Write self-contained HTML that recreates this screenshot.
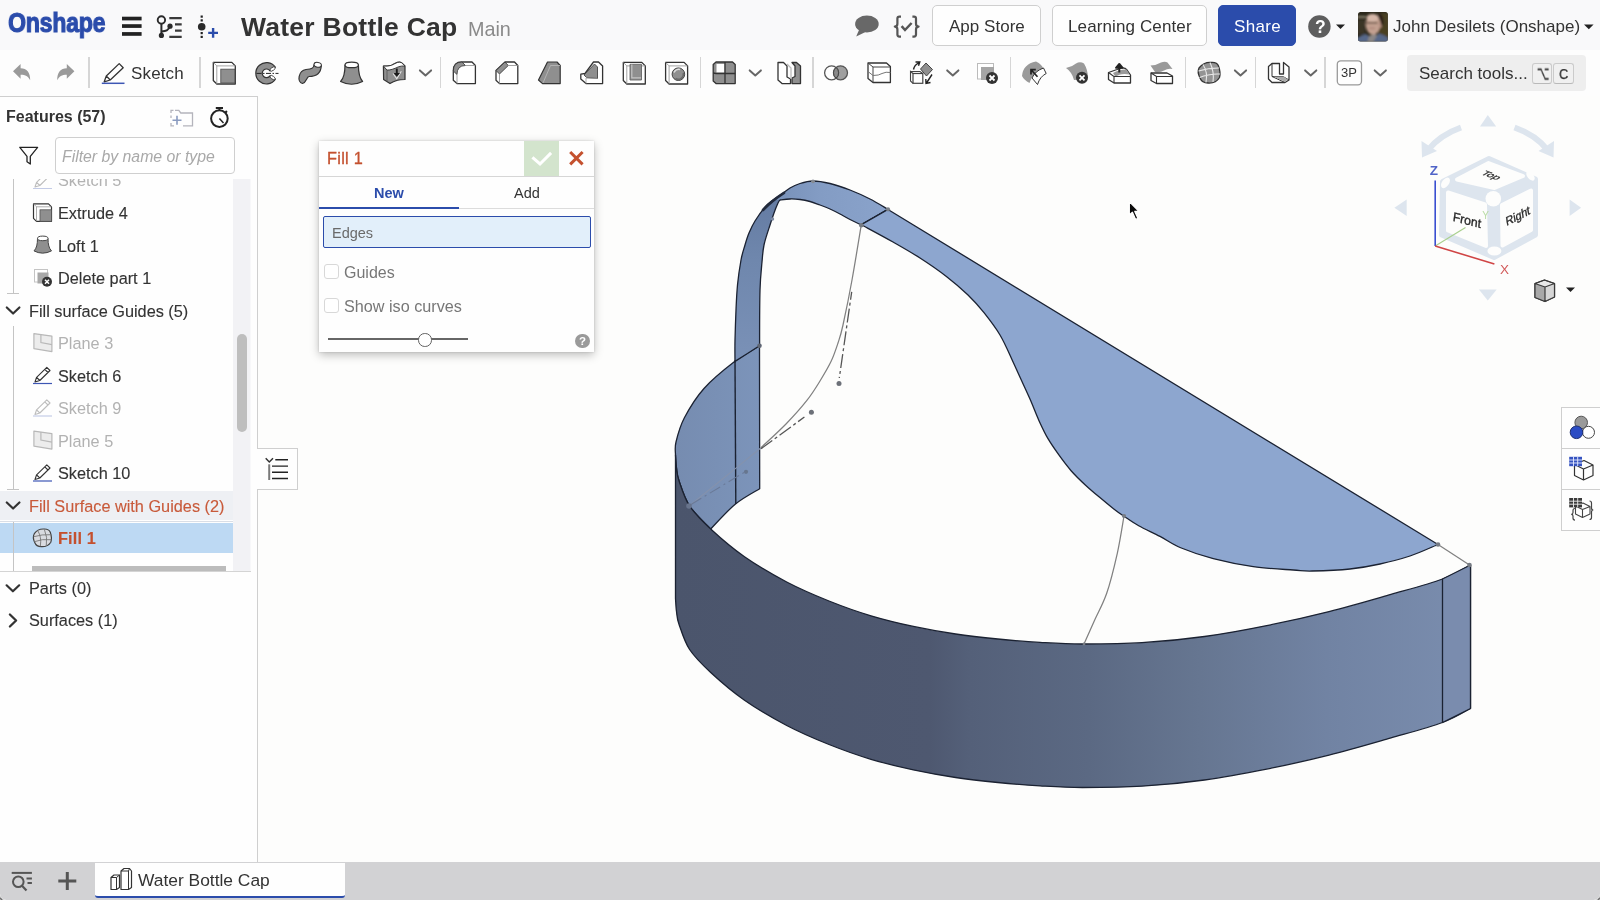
<!DOCTYPE html>
<html lang="en"><head><meta charset="utf-8"><title>Water Bottle Cap</title>
<style>
html,body{margin:0;padding:0}
body{width:1600px;height:900px;overflow:hidden;position:relative;background:#fdfdfc;font-family:"Liberation Sans",sans-serif;color:#333}
.t{position:absolute;white-space:nowrap;line-height:24px;height:24px;will-change:transform}
.abs{position:absolute}
#row1{position:absolute;left:0;top:0;width:1600px;height:50px;background:#f9f9fa}
#row2{position:absolute;left:0;top:50px;width:1600px;height:46px;background:#fdfdfd}
.btn{position:absolute;top:4.6px;height:41.5px;border:1px solid #cfcfcf;border-radius:5px;background:#fefefe;box-sizing:border-box}
.sep{position:absolute;top:57px;width:1.5px;height:31px;background:#d6d6d6}
#panel{position:absolute;left:0;top:96px;width:258px;height:766px;background:#fefefe;border-top:1px solid #cfcfcf;border-right:1px solid #cfcfcf;box-sizing:border-box}
#bottom{position:absolute;left:0;top:862.4px;width:1600px;height:38px;background:#d2d2d4}
svg{overflow:visible}
.ic{position:absolute}
</style></head><body>
<div id="row1"></div><div id="row2"></div>
<span class="t" style="left:8px;top:3.7px;height:36px;line-height:36px;font-size:28.5px;font-weight:700;color:#2b4cab;transform-origin:0 50%;transform:scaleX(0.815);letter-spacing:-0.4px;-webkit-text-stroke:1.1px #2b4cab" id="logo">Onshape</span>
<span class="t " style="left:241.0px;top:15.3px;font-size:26.5px;color:#333;font-weight:700;letter-spacing:0.25px;">Water Bottle Cap</span><span class="t " style="left:468.0px;top:17.0px;font-size:19.8px;color:#8a8a8a;font-weight:400;">Main</span><div class="btn" style="left:932px;width:109px"></div><span class="t " style="left:949.0px;top:15.3px;font-size:17.0px;color:#333;font-weight:400;letter-spacing:0.02px;">App Store</span><div class="btn" style="left:1052px;width:155px"></div><span class="t " style="left:1067.5px;top:15.3px;font-size:17.0px;color:#333;font-weight:400;letter-spacing:0.12px;">Learning Center</span><div class="btn" style="left:1218px;width:78px;background:#2b4cab;border-color:#2b4cab"></div><span class="t " style="left:1233.5px;top:15.3px;font-size:17.0px;color:#fff;font-weight:400;letter-spacing:0.35px;">Share</span><span class="t " style="left:1392.5px;top:15.3px;font-size:17.0px;color:#333;font-weight:400;">John Desilets (Onshape)</span>
<div class="sep" style="left:88.1px"></div><div class="sep" style="left:199.4px"></div><div class="sep" style="left:439.5px"></div><div class="sep" style="left:699.5px"></div><div class="sep" style="left:812.2px"></div><div class="sep" style="left:1009.6px"></div><div class="sep" style="left:1184.5px"></div><div class="sep" style="left:1254.8px"></div><div class="sep" style="left:1324.4px"></div><span class="t " style="left:131.0px;top:62.1px;font-size:17.0px;color:#333;font-weight:400;letter-spacing:0.15px;">Sketch</span><div class="abs" style="left:1407px;top:54.6px;width:178.5px;height:36.6px;background:#eeeeee;border-radius:4px"></div><span class="t " style="left:1419.0px;top:62.2px;font-size:17.0px;color:#333;font-weight:400;">Search tools...</span><div class="abs" style="left:1532.2px;top:63.2px;width:20px;height:21.2px;border:1px solid #cbcbcb;border-bottom:1.6px solid #b9b9b9;border-radius:3px;box-sizing:border-box;background:#f0f0f0"></div><div class="abs" style="left:1553.4px;top:63.2px;width:20.2px;height:21.2px;border:1px solid #cbcbcb;border-bottom:1.6px solid #b9b9b9;border-radius:3px;box-sizing:border-box;background:#f0f0f0"></div><span class="t " style="left:1534.6px;top:61.4px;font-size:14.0px;color:#333;font-weight:400;font-family:'DejaVu Sans',sans-serif;transform:scale(0.78,1.4);transform-origin:50% 56%;-webkit-text-stroke:0.2px #333;">&#8997;</span><span class="t " style="left:1558.9px;top:62.2px;font-size:14.5px;color:#333;font-weight:400;transform:scaleX(0.88);transform-origin:0 50%;-webkit-text-stroke:0.25px #333;">C</span>

<svg id="icons" width="1600" height="100" viewBox="0 0 1600 100" style="position:absolute;left:0;top:0">
<rect x="122" y="16.7" width="19.6" height="3.7" fill="#222"/><rect x="122" y="24.2" width="19.6" height="3.7" fill="#222"/><rect x="122" y="32.1" width="19.6" height="3.7" fill="#222"/><circle cx="161.4" cy="20" r="3.7" fill="none" stroke="#2a2a2a" stroke-width="1.9"/><path d="M161.4 24 V35" stroke="#2a2a2a" stroke-width="2" fill="none"/><circle cx="161.4" cy="35.4" r="2.6" fill="#2a2a2a"/><path d="M161.4 31.5 C166 31 168.5 30.5 169.8 26.5" stroke="#2a2a2a" stroke-width="1.9" fill="none"/><circle cx="170" cy="26.2" r="2.6" fill="#2a2a2a"/><path d="M169.3 18.1 H181.7 M175 24.4 H181.7 M175 30.6 H181.7 M169.3 36.9 H181.7" stroke="#3a3a3a" stroke-width="2.1" fill="none"/><rect x="200.6" y="15.5" width="2.2" height="2.2" fill="#222"/><rect x="200.6" y="19.3" width="2.2" height="2.2" fill="#222"/><rect x="200.6" y="32.0" width="2.2" height="2.2" fill="#222"/><rect x="200.6" y="35.8" width="2.2" height="2.2" fill="#222"/><circle cx="201.7" cy="26.8" r="3.8" fill="#2a2a2a"/><path d="M208.2 32.9 H218 M213.1 28 V37.8" stroke="#2b4cab" stroke-width="2.4" fill="none"/><ellipse cx="866.9" cy="24" rx="11.8" ry="8.4" fill="#686868"/><path d="M859.2 29.5 L856.2 36.6 L866 31.8 Z" fill="#686868"/><path d="M901 16.6 h-1.6 q-2 0 -2 2 v5.2 q0 2.8 -2.6 2.8 q2.6 0 2.6 2.8 v5.2 q0 2 2 2 h1.6" fill="none" stroke="#555" stroke-width="2.2" stroke-linejoin="round"/><path d="M912.4 16.6 h1.6 q2 0 2 2 v5.2 q0 2.8 2.6 2.8 q-2.6 0 -2.6 2.8 v5.2 q0 2 -2 2 h-1.6" fill="none" stroke="#555" stroke-width="2.2" stroke-linejoin="round"/><path d="M901.6 26.2 L905 30 L911.6 23" fill="none" stroke="#555" stroke-width="2.5"/><circle cx="1319.4" cy="26.5" r="11.2" fill="#5e5e5e"/><path d="M1336 24.5 h9 l-4.5 4.5 z" fill="#222"/><path d="M1584 24.5 h9.6 l-4.8 4.8 z" fill="#222"/><clipPath id="avc"><rect x="1358" y="12" width="29.8" height="29.5" rx="2.5"/></clipPath><filter id="avb" x="-10%" y="-10%" width="120%" height="120%"><feGaussianBlur stdDeviation="0.9"/></filter><g clip-path="url(#avc)"><rect x="1357" y="11" width="32" height="32" fill="#2c281b"/><g filter="url(#avb)"><rect x="1378" y="13" width="11" height="26" fill="#4a3f24"/><rect x="1357" y="16.3" width="9" height="1.3" fill="#b9b29a"/><rect x="1357" y="20" width="8" height="14" fill="#3a3626"/><path d="M1357 42 v-4 q5 -3.5 9 -4 l6 4 l7 -4.5 q5 1 9.5 4.5 v4 z" fill="#566789"/><path d="M1367.5 42 l1.5 -6 l6 -3 l2 3 l-4 6 z" fill="#8a8786"/><ellipse cx="1373" cy="24.5" rx="7.3" ry="10.3" fill="#c3a090"/><ellipse cx="1372.5" cy="17.8" rx="6" ry="3.8" fill="#d6b7a8"/><ellipse cx="1380.3" cy="25" rx="1.5" ry="3" fill="#b48e80"/><path d="M1366 22.8 h11.5" stroke="#6f5a4c" stroke-width="1.7"/><path d="M1369 28.3 h6" stroke="#a67e72" stroke-width="1.2"/><path d="M1379 13 q5 2 4.5 12 l-2.5 0 q0 -6 -3.5 -9 z" fill="#2a1f16"/></g></g><path d="M13 71.3 L20.6 63.9 V68.3 C26.8 68.5 30.2 72.2 30.2 80.3 C28.2 76.4 25.6 74.9 20.6 74.8 V78.7 Z" fill="#9a9a9a"/><path d="M13 71.3 L20.6 63.9 V68.3 C26.8 68.5 30.2 72.2 30.2 80.3 C28.2 76.4 25.6 74.9 20.6 74.8 V78.7 Z" fill="#9a9a9a" transform="translate(87.4,0) scale(-1,1)"/><path d="M104.2 81.8 L106.3 76 L119.2 63.6 L123.2 67.8 L110.2 80 Z M106.3 76 L110.2 80" fill="#fff" stroke="#333" stroke-width="1.3" stroke-linejoin="round"/><path d="M101.8 83.3 H124.5" stroke="#3d56b4" stroke-width="1.5"/><path d="M213.3 62.4 h18.5 l3.5 3.5 v18.1 h-18.5 l-3.5 -3.5 z" fill="#fff" stroke="#333" stroke-width="1.3" stroke-linejoin="round"/><path d="M213.3 62.4 l3.5 3.5 h18.5 M216.8 65.9 v18.1" fill="none" stroke="#999" stroke-width="0.9"/><rect x="220.8" y="69.2" width="14" height="13.8" fill="#8f8f8f" stroke="#555" stroke-width="0.9"/><path d="M275.3 67.2 A10.7 10.7 0 1 0 275.3 79.4 L270 75.8 A4.3 4.3 0 1 1 270 70.8 Z" fill="#8f8f8f" stroke="#333" stroke-width="1.2" stroke-linejoin="round"/><ellipse cx="272.6" cy="69" rx="3.1" ry="1.5" transform="rotate(-35 272.6 69)" fill="#fff" stroke="#333" stroke-width="0.8"/><ellipse cx="272.6" cy="77.6" rx="3.1" ry="1.5" transform="rotate(35 272.6 77.6)" fill="#fff" stroke="#333" stroke-width="0.8"/><path d="M256.5 73.4 H278.5" stroke="#222" stroke-width="1" stroke-dasharray="5 1.5 1.5 1.5"/><path d="M302.5 83.5 C296.5 82 298.5 70.5 306 69.5 C312 69 313.5 68.5 314.2 64.5 L321.3 65.5 C321 73 316 76.5 309 76.5 C306.5 76.8 306.6 82.5 302.5 83.5 Z" fill="#8f8f8f" stroke="#333" stroke-width="1.2" stroke-linejoin="round"/><ellipse cx="317.7" cy="64.8" rx="3.7" ry="2.4" transform="rotate(8 317.7 64.8)" fill="#fff" stroke="#333" stroke-width="1"/><path d="M345 65 C345 72 344 78 340.6 81.5 Q351.6 87 362.6 81.5 C359.5 78 358.4 72 358.4 65 Z" fill="#8f8f8f" stroke="#333" stroke-width="1.2" stroke-linejoin="round"/><ellipse cx="351.7" cy="64.9" rx="6.7" ry="2.8" fill="#fff" stroke="#333" stroke-width="1.2"/><path d="M383.4 66 Q388 66.5 391.5 65.3 Q395 63.5 397.5 62.4 Q400 61.8 401.5 62.7 L405 66 V79.5 Q400 79.5 397.5 80.3 Q393 81.8 390 83.6 L383.6 79.5 Z" fill="#8f8f8f" stroke="#333" stroke-width="1.2" stroke-linejoin="round"/><path d="M383.4 66 Q388 66.5 391.5 65.3 Q395 63.5 397.5 62.4 Q400 61.8 401.5 62.7 L405 66 Q401 65.8 398.5 66.8 Q395 68.5 392.3 69.3 Q389.5 70.2 387 70.1 Z" fill="#fff" stroke="#333" stroke-width="0.9" stroke-linejoin="round"/><path d="M387 70.1 V81.5" stroke="#555" stroke-width="0.8"/><path d="M393 73.5 L396.8 78.8 L401.3 71.3" fill="none" stroke="#e4e4e4" stroke-width="1.1"/><path d="M396.8 68.6 V74" stroke="#1a1a1a" stroke-width="1.9"/><path d="M393.6 73 H400 L396.8 76.8 Z" fill="#1a1a1a"/><path d="M419.9 70.4 l5.6 5 l5.6 -5" fill="none" stroke="#666" stroke-width="2" stroke-linecap="round" stroke-linejoin="round"/><path d="M462 62 H472 L475.4 65.5 V83.6 H457 L453.3 80.3 V71 Q453.3 62 462 62 Z" fill="#fff" stroke="#333" stroke-width="1.3" stroke-linejoin="round"/><path d="M462 62 Q453.3 62 453.3 71 L457 74.5 Q457 65.5 465.5 65.5 Z" fill="#8f8f8f" stroke="#333" stroke-width="0.8"/><path d="M465.5 65.5 H475.4 M457 74.5 V83.6" stroke="#999" stroke-width="0.9" fill="none"/><path d="M505 62 H514.5 L517.8 65.5 V83.6 H499.5 L496 80.3 V70.5 Z" fill="#fff" stroke="#333" stroke-width="1.3" stroke-linejoin="round"/><path d="M505 62 L496 70.5 L499.5 74 L508.3 65.5 Z" fill="#8f8f8f" stroke="#333" stroke-width="0.8"/><path d="M508.3 65.5 H517.8 M499.5 74 V83.6" stroke="#999" stroke-width="0.9" fill="none"/><path d="M547.5 62 H557 L560.2 65.5 V83.6 H542.5 L538.5 80 Z" fill="#8f8f8f" stroke="#333" stroke-width="1.2" stroke-linejoin="round"/><path d="M550.5 65.5 L543 83 M550.5 65.5 H560" stroke="#bbb" stroke-width="0.8" fill="none"/><path d="M593.5 62 H598.5 L602.6 66 V83.6 H586 L580.8 79 V74.2 L585 73.5 Z" fill="#fff" stroke="#333" stroke-width="1.3" stroke-linejoin="round"/><path d="M594.5 64 L597.5 67 V78.5 L586.5 77.5 L584 75 Z" fill="#8f8f8f" stroke="#444" stroke-width="0.9"/><path d="M586 83.6 V78 L597.5 78.5" stroke="#999" stroke-width="0.8" fill="none"/><path d="M623.3 62.4 h18.5 l3.5 3.5 v18.1 h-18.5 l-3.5 -3.5 z" fill="#fff" stroke="#333" stroke-width="1.3" stroke-linejoin="round"/><path d="M623.3 62.4 l3.5 3.5 h18.5 M626.8 65.9 v18.1" fill="none" stroke="#999" stroke-width="0.9"/><path d="M630 64.3 V80 H641.5 V64.3 Z" fill="#8f8f8f" stroke="#666" stroke-width="0.9"/><path d="M631.8 64.5 V77.8 H641" fill="none" stroke="#c4c4c4" stroke-width="1.2"/><path d="M665.6 62.4 h18.5 l3.5 3.5 v18.1 h-18.5 l-3.5 -3.5 z" fill="#fff" stroke="#333" stroke-width="1.3" stroke-linejoin="round"/><path d="M665.6 62.4 l3.5 3.5 h18.5 M669.1 65.9 v18.1" fill="none" stroke="#999" stroke-width="0.9"/><circle cx="678.4" cy="74.2" r="6.3" fill="#8f8f8f" stroke="#444" stroke-width="1"/><path d="M674 72.5 A5 5 0 0 1 680 69.5" stroke="#ddd" stroke-width="1.6" fill="none"/><path d="M675.5 78.5 A5.2 5.2 0 0 0 683.3 73" stroke="#6a6a6a" stroke-width="1.6" fill="none"/><path d="M713.2 64.5 L716 62 H732.5 L735.2 64.5 V83.6 H716 L713.2 81 Z" fill="#8f8f8f" stroke="#333" stroke-width="1.3" stroke-linejoin="round"/><rect x="716.5" y="64" width="8" height="8.5" fill="#fff"/><path d="M713.2 73 L716 73.5 H735.2 M725 62 V83.6" stroke="#333" stroke-width="1.3" fill="none"/><path d="M749.7 70.4 l5.6 5 l5.6 -5" fill="none" stroke="#666" stroke-width="2" stroke-linecap="round" stroke-linejoin="round"/><path d="M778 62.5 H783.5 L787 66 V77 L790.5 79 V83.6 H782 L778 80 Z" fill="#fff" stroke="#333" stroke-width="1.3" stroke-linejoin="round"/><path d="M792 62.5 H796.5 L800.5 66 V83.6 H792 V78 L795 76.5 V66 L792 62.5 Z" fill="#8f8f8f" stroke="#333" stroke-width="1.3" stroke-linejoin="round"/><path d="M787 64 L791 68 V79" stroke="#bbb" stroke-width="1.3" fill="none"/><circle cx="840.5" cy="72.8" r="7" fill="#a0a0a0" stroke="#555" stroke-width="1.3"/><circle cx="831.6" cy="72.8" r="7" fill="none" stroke="#555" stroke-width="1.3"/><path d="M836.050 67.4 A7 7 0 0 1 836.050 78.2 A7 7 0 0 1 836.050 67.4 Z" fill="#8a8a8a" stroke="#444" stroke-width="1"/><path d="M868 63 H886.5 L890.4 66.5 V82.5 H873 L868 78.5 Z" fill="#fff" stroke="#333" stroke-width="1.3" stroke-linejoin="round"/><path d="M868 63 L873 67 H890.4 M873 67 V82.5" stroke="#444" stroke-width="1" fill="none"/><path d="M868 71.5 L873 75.5 Q879 75.5 882 73.5 Q886 71.5 890.4 72.5" stroke="#777" stroke-width="1" fill="none"/><rect x="913" y="73.5" width="9.8" height="9.8" fill="#fff" stroke="#444" stroke-width="1.2"/><path d="M913 73.5 L910.5 71.5 V81 L913 83.3 M910.5 71.5 H920 L922.8 73.5" fill="none" stroke="#444" stroke-width="1.1"/><path d="M926 63 L932.5 69.5 L926.5 76 L920.5 69 Z" fill="#8f8f8f" stroke="#444" stroke-width="1"/><path d="M913.5 69.5 Q914.5 64.5 919 62.8 M915.5 62 H919.8 L918.5 65.8" fill="none" stroke="#222" stroke-width="1.4"/><path d="M932 74.5 L926.5 83 M925.8 79 L926 83.5 L930.5 82.5" fill="none" stroke="#222" stroke-width="1.4"/><path d="M947.2 70.4 l5.6 5 l5.6 -5" fill="none" stroke="#666" stroke-width="2" stroke-linecap="round" stroke-linejoin="round"/><rect x="977.5" y="63.5" width="16" height="15.5" fill="#fff" stroke="#bbb" stroke-width="1"/><rect x="981" y="67" width="13" height="13" fill="#a5a5a5"/><circle cx="992" cy="78" r="6" fill="#333"/><path d="M989.5 75.5 L994.5 80.5 M994.5 75.5 L989.5 80.5" stroke="#fff" stroke-width="1.8"/><path d="M1022 76 Q1023 64 1036 61.5 Q1042 64 1044 70 Q1034 70 1029.5 83 Q1024 80 1022 76 Z" fill="#9a9a9a"/><path d="M1032 78 Q1035 71 1043.5 68 L1046.2 73.5 Q1040 76.5 1037.5 84.5 Z" fill="#fff" stroke="#333" stroke-width="1"/><path d="M1031.5 70.2 L1037.5 76.8 M1031 74.5 V69.7 H1035.8" fill="none" stroke="#222" stroke-width="1.7"/><path d="M1066 68 Q1072 67 1076 63.5 Q1080 61 1084 63.5 Q1088 70 1088 78 Q1080 80 1074 80 Q1072 72 1066 68 Z" fill="#9a9a9a"/><circle cx="1082" cy="77.8" r="6" fill="#333"/><path d="M1079.5 75.3 L1084.5 80.3 M1084.5 75.3 L1079.5 80.3" stroke="#fff" stroke-width="1.8"/><path d="M1108.5 72.5 L1117 69.5 Q1124 66 1127 70 L1130.5 75 V83 H1114 L1108.5 79.5 Z" fill="#fff" stroke="#333" stroke-width="1.3" stroke-linejoin="round"/><path d="M1113 73 Q1120 69 1126.5 69.5 L1129.5 74.5 Q1120 73 1115.5 77 Z" fill="#9a9a9a"/><path d="M1108.5 72.5 L1114 76.5 V83 M1114 76.5 H1130.5" fill="none" stroke="#333" stroke-width="1.1"/><path d="M1119.3 72.5 V66.5 M1116 67.8 L1119.3 64 L1122.6 67.8 Z" fill="#222" stroke="#222" stroke-width="2" stroke-linejoin="round"/><path d="M1150.5 65.5 Q1157 65 1161 62.5 Q1165 61 1167.5 62.5 L1172.5 69 Q1168 68 1164 70.5 Q1160 73 1155 72 Z" fill="#9a9a9a"/><path d="M1151 73 H1167 L1172.5 76 V83.5 H1156.5 L1151 80.5 Z" fill="#fff" stroke="#333" stroke-width="1.3" stroke-linejoin="round"/><path d="M1151 73 L1156.5 76.5 H1172.5 M1156.5 76.5 V83.5" fill="none" stroke="#333" stroke-width="1.1"/><path d="M1199 68 Q1204 62 1211 62.5 Q1217 62 1218.5 66 Q1221 73 1219.5 77.5 Q1216 83.5 1208 83 Q1202 83 1200 78 Q1197 72 1199 68 Z" fill="#949494" stroke="#333" stroke-width="1.3"/><path d="M1203 64.5 Q1208 72 1206 82.5 M1210 62.5 Q1214.5 72 1213 82 M1198.5 71 Q1208 68 1219 68 M1199.5 77.5 Q1209 73.5 1220 74" fill="none" stroke="#e8e8e8" stroke-width="1.1"/><path d="M1234.9 70.4 l5.6 5 l5.6 -5" fill="none" stroke="#666" stroke-width="2" stroke-linecap="round" stroke-linejoin="round"/><path d="M1268.5 66.5 L1272 63.5 H1279.5 V74 H1283.5 V62.5 L1289 67 V80 L1285 82.5 H1272 L1268.5 79 Z" fill="#fff" stroke="#333" stroke-width="1.3" stroke-linejoin="round"/><path d="M1272 63.5 V76.5 L1285 82.5 M1272 76.5 H1283 L1289 80" fill="none" stroke="#333" stroke-width="1"/><path d="M1273 76.5 H1283.5 L1288 79.5 L1285 81.8 Z" fill="#aaa"/><path d="M1305.1 70.4 l5.6 5 l5.6 -5" fill="none" stroke="#666" stroke-width="2" stroke-linecap="round" stroke-linejoin="round"/><rect x="1337.3" y="60.8" width="24.2" height="24" rx="3.5" fill="#fefefe" stroke="#9a9a9a" stroke-width="1.3"/><path d="M1374.7 70.4 l5.6 5 l5.6 -5" fill="none" stroke="#666" stroke-width="2" stroke-linecap="round" stroke-linejoin="round"/></svg>
<span class="t " style="left:1341.3px;top:61.0px;font-size:13.0px;color:#333;font-weight:400;">3P</span><span class="t " style="left:1314.6px;top:14.8px;font-size:17.5px;color:#fff;font-weight:700;">?</span><div id="panel"></div>
<span class="t " style="left:6.0px;top:104.7px;font-size:16.0px;color:#333;font-weight:700;">Features (57)</span><div class="abs" style="left:54.5px;top:137px;width:180px;height:36.5px;border:1px solid #cfcfcf;border-radius:4px;box-sizing:border-box;background:#fff"></div><span class="t " style="left:62.0px;top:144.5px;font-size:15.8px;color:#a9a9a9;font-weight:400;font-style:italic;">Filter by name or type</span><div class="abs" id="list" style="left:0;top:176px;width:250.5px;height:395.5px;overflow:hidden;clip-path:inset(3px 0 0 0)"><div class="abs" style="left:232.5px;top:3px;width:18px;height:393px;background:#f2f2f5"></div><div class="abs" style="left:237px;top:158px;width:10px;height:97.5px;background:#bebebe;border-radius:5px"></div><div class="abs" style="left:0;top:314.7px;width:232.5px;height:29.3px;background:#eef0f4"></div><div class="abs" style="left:0;top:347.0px;width:232.5px;height:29.6px;background:#bdd9f3"></div><span class="t " style="left:57.6px;top:-7.6px;font-size:16.3px;color:#b2b2b2;font-weight:400;">Sketch 5</span><span class="t " style="left:57.6px;top:24.8px;font-size:16.3px;color:#333;font-weight:400;-webkit-text-stroke:0.12px #333;">Extrude 4</span><span class="t " style="left:57.6px;top:57.8px;font-size:16.3px;color:#333;font-weight:400;-webkit-text-stroke:0.12px #333;">Loft 1</span><span class="t " style="left:57.6px;top:89.8px;font-size:16.3px;color:#333;font-weight:400;-webkit-text-stroke:0.12px #333;">Delete part 1</span><span class="t " style="left:28.6px;top:122.8px;font-size:16.3px;color:#333;font-weight:400;-webkit-text-stroke:0.12px #333;">Fill surface Guides (5)</span><span class="t " style="left:57.6px;top:154.8px;font-size:16.3px;color:#b2b2b2;font-weight:400;">Plane 3</span><span class="t " style="left:57.6px;top:187.8px;font-size:16.3px;color:#333;font-weight:400;-webkit-text-stroke:0.12px #333;">Sketch 6</span><span class="t " style="left:57.6px;top:219.8px;font-size:16.3px;color:#b2b2b2;font-weight:400;">Sketch 9</span><span class="t " style="left:57.6px;top:252.8px;font-size:16.3px;color:#b2b2b2;font-weight:400;">Plane 5</span><span class="t " style="left:57.6px;top:284.8px;font-size:16.3px;color:#333;font-weight:400;-webkit-text-stroke:0.12px #333;">Sketch 10</span><span class="t " style="left:28.6px;top:317.8px;font-size:16.3px;color:#c85a3a;font-weight:400;-webkit-text-stroke:0.12px #c85a3a;">Fill Surface with Guides (2)</span><span class="t " style="left:57.6px;top:349.8px;font-size:16.3px;color:#c4502e;font-weight:700;letter-spacing:0.15px;-webkit-text-stroke:0.12px #c4502e;">Fill 1</span><div class="abs" style="left:13.3px;top:0.0px;width:1.2px;height:117.5px;background:#c4c4c4"></div><div class="abs" style="left:13.3px;top:150.0px;width:1.2px;height:163.0px;background:#c4c4c4"></div><div class="abs" style="left:13.3px;top:346.0px;width:1.2px;height:50.0px;background:#c4c4c4"></div><div class="abs" style="left:7px;top:117.0px;width:12px;height:1.2px;background:#c4c4c4"></div><div class="abs" style="left:7px;top:312.5px;width:12px;height:1.2px;background:#c4c4c4"></div><div class="abs" style="left:32px;top:389.7px;width:193.5px;height:6px;background:#bcbcbc"></div><div class="abs" style="left:0;top:344.5px;width:232.5px;height:1px;background:#d9dee6"></div></div><div class="abs" style="left:0;top:571px;width:250.5px;height:1px;background:#d4d4d4"></div><span class="t " style="left:28.8px;top:575.9px;font-size:16.3px;color:#333;font-weight:400;-webkit-text-stroke:0.12px #333;">Parts (0)</span><span class="t " style="left:28.8px;top:607.6px;font-size:16.3px;color:#333;font-weight:400;-webkit-text-stroke:0.12px #333;">Surfaces (1)</span><div class="abs" style="left:257px;top:448px;width:41px;height:42px;border:1px solid #cfcfcf;border-left:none;box-sizing:border-box;background:#fefefe"></div>
<div class="abs" style="left:319px;top:140.7px;width:275.2px;height:211px;background:#fefefe;box-shadow:0 3px 9px rgba(0,0,0,0.26),0 0 2px rgba(0,0,0,0.15)"></div><div class="abs" style="left:524.4px;top:140.7px;width:34.5px;height:35.3px;background:#d3e4cd"></div><div class="abs" style="left:319px;top:175.8px;width:275.2px;height:1px;background:#d6d6d6"></div><div class="abs" style="left:319px;top:208px;width:275.2px;height:1px;background:#dcdcdc"></div><div class="abs" style="left:319px;top:207.2px;width:140px;height:2px;background:#2b4cab"></div><span class="t " style="left:327.3px;top:145.9px;font-size:16.3px;color:#c4512f;font-weight:400;letter-spacing:0.30px;-webkit-text-stroke:0.3px #c4512f;">Fill 1</span><span class="t " style="left:374.0px;top:180.5px;font-size:14.5px;color:#2b4cab;font-weight:700;">New</span><span class="t " style="left:513.5px;top:180.5px;font-size:14.5px;color:#333;font-weight:400;">Add</span><div class="abs" style="left:323px;top:216px;width:267.5px;height:31.5px;border:1.5px solid #2b4cab;border-radius:2px;box-sizing:border-box;background:#e2effa"></div><span class="t " style="left:332.0px;top:221.0px;font-size:14.5px;color:#6a6a6a;font-weight:400;">Edges</span><div class="abs" style="left:324px;top:264.3px;width:14.5px;height:14.5px;border:1px solid #d8d8d8;border-radius:3px;box-sizing:border-box;background:#fff"></div><div class="abs" style="left:324px;top:298.3px;width:14.5px;height:14.5px;border:1px solid #d8d8d8;border-radius:3px;box-sizing:border-box;background:#fff"></div><span class="t " style="left:344.3px;top:261.0px;font-size:16.0px;color:#777;font-weight:400;">Guides</span><span class="t " style="left:344.3px;top:294.4px;font-size:16.2px;color:#777;font-weight:400;">Show iso curves</span><div class="abs" style="left:328px;top:338.2px;width:140px;height:2px;background:#666"></div><div class="abs" style="left:418.2px;top:333.3px;width:13.4px;height:13.4px;border:1.5px solid #606060;border-radius:50%;box-sizing:border-box;background:#fff"></div><div class="abs" style="left:575px;top:333.5px;width:14.5px;height:14.5px;border-radius:50%;background:#9a9a9a"></div><span class="t " style="left:578.7px;top:329.0px;font-size:11.5px;color:#fff;font-weight:700;">?</span>

<svg id="model" width="1600" height="900" viewBox="0 0 1600 900" style="position:absolute;left:0;top:0;pointer-events:none">
<defs>
<linearGradient id="gband" gradientUnits="userSpaceOnUse" x1="675" y1="0" x2="1470" y2="0">
<stop offset="0" stop-color="#4b556c"/>
<stop offset="0.32" stop-color="#4e5870"/>
<stop offset="0.37" stop-color="#546079"/>
<stop offset="0.52" stop-color="#5b6983"/>
<stop offset="0.66" stop-color="#667691"/>
<stop offset="0.82" stop-color="#7183a3"/>
<stop offset="1" stop-color="#7a8dae"/>
</linearGradient>
<linearGradient id="ginner" gradientUnits="userSpaceOnUse" x1="675" y1="0" x2="760" y2="0">
<stop offset="0" stop-color="#768cb0"/>
<stop offset="1" stop-color="#7c94ba"/>
</linearGradient>
<linearGradient id="gstripv" gradientUnits="userSpaceOnUse" x1="0" y1="500" x2="0" y2="200">
<stop offset="0" stop-color="#7b93b9"/>
<stop offset="0.5" stop-color="#7990b6"/>
<stop offset="0.8" stop-color="#6f87ad"/>
<stop offset="1" stop-color="#657ca3"/>
</linearGradient>
<linearGradient id="gstript" gradientUnits="userSpaceOnUse" x1="775" y1="0" x2="888" y2="0">
<stop offset="0" stop-color="#7891b9"/>
<stop offset="0.4" stop-color="#839cc4"/>
<stop offset="1" stop-color="#8aa3cb"/>
</linearGradient>
<linearGradient id="gstrip" gradientUnits="userSpaceOnUse" x1="735" y1="360" x2="860" y2="190">
<stop offset="0" stop-color="#7d95bc"/>
<stop offset="0.55" stop-color="#7088ae"/>
<stop offset="0.7" stop-color="#7f98c0"/>
<stop offset="1" stop-color="#8ba4cc"/>
</linearGradient>
</defs>
<path d="M675.5 455.0 C675.6 452.8 674.5 448.2 676.0 442.0 C677.5 435.8 679.7 426.7 684.4 417.8 C689.1 408.9 695.6 397.9 704.0 388.5 C712.4 379.1 725.4 368.7 734.6 361.6 C743.9 354.5 755.4 348.4 759.5 345.7 L759.7 488.7 C755.7 491.2 743.7 497.3 735.5 504.0 C727.3 510.7 714.8 524.8 710.7 529.0 C707.2 525.2 694.9 514.0 689.6 506.0 C684.3 497.9 681.2 487.0 679.0 480.7 C676.8 474.4 677.1 472.3 676.5 468.0 C675.9 463.7 675.7 457.2 675.5 455.0 Z" fill="url(#ginner)" stroke="#1b2232" stroke-width="1.3" stroke-linejoin="round"/>
<path d="M735.0 362.0 C735.0 358.3 734.8 348.7 735.0 340.0 C735.2 331.3 735.6 319.2 736.0 310.0 C736.4 300.8 736.7 293.3 737.5 285.0 C738.3 276.7 739.8 266.7 741.0 260.0 C742.2 253.3 743.7 249.5 745.0 245.0 C746.3 240.5 747.3 237.0 749.0 233.0 C750.7 229.0 752.3 225.3 755.0 221.0 C757.7 216.7 762.0 210.5 765.0 207.0 C768.0 203.5 771.7 201.2 773.0 200.0 L780.0 200.0 C779.7 200.5 779.0 200.8 778.0 203.0 C777.0 205.2 775.3 209.3 774.0 213.0 C772.7 216.7 771.7 219.7 770.0 225.0 C768.3 230.3 765.3 238.8 764.0 245.0 C762.7 251.2 762.7 254.5 762.0 262.0 C761.3 269.5 760.4 277.0 760.0 290.0 C759.6 303.0 759.6 330.7 759.6 340.0 C759.6 349.3 759.7 345.0 759.7 346.0 L759.5 345.7 C755.4 348.4 738.8 359.0 734.6 361.6 Z" fill="url(#gstripv)"/><path d="M773.0 200.0 C774.5 199.0 779.2 196.0 782.0 194.0 C784.8 192.0 787.0 189.8 790.0 188.0 C793.0 186.2 796.2 184.7 800.0 183.5 C803.8 182.3 808.0 181.0 813.0 181.0 C818.0 181.0 823.8 182.0 830.0 183.5 C836.2 185.0 843.3 187.4 850.0 190.0 C856.7 192.6 863.7 195.8 870.0 199.0 C876.3 202.2 885.0 207.6 888.0 209.3 L861.3 225.0 C859.4 224.1 853.5 221.3 850.0 219.5 C846.5 217.7 843.3 215.8 840.0 214.0 C836.7 212.2 833.3 210.5 830.0 209.0 C826.7 207.5 823.3 206.2 820.0 205.0 C816.7 203.8 813.3 202.4 810.0 201.5 C806.7 200.6 803.3 199.9 800.0 199.5 C796.7 199.1 793.3 198.9 790.0 199.0 C786.7 199.1 781.7 199.8 780.0 200.0 Z" fill="url(#gstript)"/><path d="M735.0 362.0 C735.0 358.3 734.8 348.7 735.0 340.0 C735.2 331.3 735.6 319.2 736.0 310.0 C736.4 300.8 736.7 293.3 737.5 285.0 C738.3 276.7 739.8 266.7 741.0 260.0 C742.2 253.3 743.7 249.5 745.0 245.0 C746.3 240.5 747.3 237.0 749.0 233.0 C750.7 229.0 752.3 225.3 755.0 221.0 C757.7 216.7 762.0 210.5 765.0 207.0 C768.0 203.5 770.2 202.2 773.0 200.0 C775.8 197.8 779.2 196.0 782.0 194.0 C784.8 192.0 787.0 189.8 790.0 188.0 C793.0 186.2 796.2 184.7 800.0 183.5 C803.8 182.3 808.0 181.0 813.0 181.0 C818.0 181.0 823.8 182.0 830.0 183.5 C836.2 185.0 843.3 187.4 850.0 190.0 C856.7 192.6 863.7 195.8 870.0 199.0 C876.3 202.2 885.0 207.6 888.0 209.3 L861.3 225.0 C859.4 224.1 853.5 221.3 850.0 219.5 C846.5 217.7 843.3 215.8 840.0 214.0 C836.7 212.2 833.3 210.5 830.0 209.0 C826.7 207.5 823.3 206.2 820.0 205.0 C816.7 203.8 813.3 202.4 810.0 201.5 C806.7 200.6 803.3 199.9 800.0 199.5 C796.7 199.1 793.3 198.9 790.0 199.0 C786.7 199.1 781.7 199.8 780.0 200.0 C779.7 200.5 779.0 200.8 778.0 203.0 C777.0 205.2 775.3 209.3 774.0 213.0 C772.7 216.7 771.7 219.7 770.0 225.0 C768.3 230.3 765.3 238.8 764.0 245.0 C762.7 251.2 762.7 254.5 762.0 262.0 C761.3 269.5 760.4 277.0 760.0 290.0 C759.6 303.0 759.6 330.7 759.6 340.0 C759.6 349.3 759.7 345.0 759.7 346.0 L759.5 345.7 C755.4 348.4 738.8 359.0 734.6 361.6 Z" fill="none" stroke="#1b2232" stroke-width="1.3" stroke-linejoin="round"/>
<path d="M735 361.6 L735.8 504" stroke="#1b2232" stroke-width="1.4" fill="none"/>
<path d="M861.3 224.7 L888 209.5" stroke="#1b2232" stroke-width="1.6" fill="none"/>
<path d="M861.3 224.7 C866.6 227.6 883.2 236.4 893.0 242.0 C902.8 247.6 911.0 252.2 920.0 258.0 C929.0 263.8 938.7 270.5 946.7 276.7 C954.7 282.9 961.8 289.0 968.0 295.0 C974.2 301.0 978.7 306.0 984.0 312.7 C989.3 319.4 995.2 327.0 1000.0 335.0 C1004.8 343.0 1009.0 353.2 1012.5 360.7 C1016.0 368.2 1018.3 373.5 1021.3 380.0 C1024.2 386.5 1027.2 392.8 1030.2 399.6 C1033.2 406.4 1036.1 414.4 1039.1 420.9 C1042.1 427.4 1044.7 433.1 1048.0 438.7 C1051.3 444.3 1054.9 449.4 1058.7 454.7 C1062.5 460.0 1066.7 465.7 1071.1 470.7 C1075.5 475.7 1080.5 480.5 1085.3 484.9 C1090.0 489.3 1094.8 493.3 1099.6 497.3 C1104.3 501.3 1109.8 505.8 1113.8 508.9 C1117.8 512.0 1119.4 513.2 1123.6 516.0 C1127.8 518.8 1132.6 522.4 1138.7 525.8 C1144.8 529.2 1152.9 532.7 1160.0 536.4 C1167.1 540.1 1172.4 544.3 1181.3 548.0 C1190.2 551.7 1201.3 555.6 1213.3 558.7 C1225.3 561.8 1240.0 564.8 1253.3 566.7 C1266.6 568.6 1283.5 569.3 1293.3 570.0 C1303.1 570.7 1302.5 571.2 1312.0 571.0 C1321.5 570.8 1338.7 570.2 1350.0 569.0 C1361.3 567.8 1370.0 566.2 1380.0 564.0 C1390.0 561.8 1400.3 559.2 1410.0 556.0 C1419.7 552.8 1433.3 546.4 1438.0 544.5 L888.0 209.5 Z" fill="#8da6cf" stroke="#1b2232" stroke-width="1.3" stroke-linejoin="round"/>
<path d="M675.5 455.0 C675.7 457.2 675.9 463.7 676.5 468.0 C677.1 472.3 676.8 474.4 679.0 480.7 C681.2 487.0 684.3 497.9 689.6 506.0 C694.9 514.0 701.6 520.5 710.7 529.0 C719.9 537.5 731.8 547.9 744.5 556.7 C757.2 565.5 772.6 574.6 786.7 582.0 C800.8 589.4 815.0 595.4 829.0 601.0 C843.0 606.6 856.9 611.6 871.0 615.8 C885.1 620.0 899.3 623.4 913.4 626.4 C927.5 629.4 941.5 631.9 955.6 634.0 C969.7 636.1 983.7 637.6 997.8 639.0 C1011.9 640.4 1025.9 641.6 1040.0 642.4 C1054.1 643.2 1065.3 644.0 1082.3 644.0 C1099.3 644.0 1121.6 644.0 1142.0 642.7 C1162.4 641.5 1183.7 639.4 1204.5 636.5 C1225.3 633.6 1246.0 629.8 1266.7 625.6 C1287.5 621.5 1308.3 616.8 1329.0 611.6 C1349.7 606.4 1372.1 599.8 1391.0 594.4 C1409.9 589.0 1429.2 583.9 1442.5 579.0 C1455.8 574.1 1465.8 567.3 1470.5 565.0 L1470.5 708.5 C1465.8 710.8 1455.8 717.6 1442.5 722.5 C1429.2 727.4 1409.9 732.5 1391.0 737.9 C1372.1 743.3 1349.7 749.9 1329.0 755.1 C1308.3 760.3 1287.5 765.0 1266.7 769.1 C1246.0 773.2 1225.3 777.1 1204.5 780.0 C1183.7 782.9 1162.4 785.0 1142.0 786.2 C1121.6 787.5 1099.3 787.5 1082.3 787.5 C1065.3 787.5 1054.1 786.7 1040.0 785.9 C1025.9 785.1 1011.9 783.9 997.8 782.5 C983.7 781.1 969.7 779.6 955.6 777.5 C941.5 775.4 927.5 772.9 913.4 769.9 C899.3 766.9 885.1 763.5 871.0 759.3 C856.9 755.1 843.0 750.1 829.0 744.5 C815.0 738.9 800.8 732.9 786.7 725.5 C772.6 718.1 757.2 709.0 744.5 700.2 C731.8 691.4 719.9 681.0 710.7 672.5 C701.6 664.0 694.9 657.5 689.6 649.5 C684.3 641.5 681.2 630.5 679.0 624.2 C676.8 617.9 677.1 615.8 676.5 611.5 C675.9 607.2 675.7 600.7 675.5 598.5 Z" fill="url(#gband)" stroke="#1b2232" stroke-width="1.3" stroke-linejoin="round"/>
<path d="M1442.5 579.0 C1447.2 576.7 1465.8 567.3 1470.5 565.0 L1470.5 708.5 C1465.8 710.8 1447.2 720.2 1442.5 722.5 Z" fill="#7a8cae" stroke="#1b2232" stroke-width="1.3" stroke-linejoin="round"/>
<path d="M689.0 506.0 C695.0 501.2 713.0 486.7 725.0 477.0 C737.0 467.3 754.8 452.8 760.7 448.0" stroke="#8492ad" stroke-width="1.1" fill="none"/>
<path d="M760.7 448.0 C764.9 444.0 778.3 431.9 786.0 424.0 C793.7 416.1 801.0 407.9 806.7 400.7 C812.4 393.5 816.0 387.5 820.0 381.0 C824.0 374.5 828.0 367.9 831.0 361.6 C834.0 355.3 836.0 349.1 838.0 343.0 C840.0 336.9 840.7 335.5 843.0 325.0 C845.3 314.5 849.0 296.7 852.0 280.0 C855.0 263.3 859.8 233.9 861.3 224.7" stroke="#808080" stroke-width="1.25" fill="none"/>
<path d="M1124.0 516.0 C1122.9 522.2 1120.2 540.4 1117.3 553.3 C1114.4 566.2 1110.5 582.2 1106.7 593.3 C1102.9 604.4 1098.5 611.5 1094.7 620.0 C1090.9 628.5 1085.8 640.0 1084.0 644.0" stroke="#808080" stroke-width="1.25" fill="none"/>
<path d="M1438 544.5 L1469.5 565" stroke="#808080" stroke-width="1.25" fill="none"/>
<path d="M761 448.8 L804.4 417" stroke="#555" stroke-width="1.3" stroke-dasharray="14 3 3 3" fill="none"/>
<path d="M851.7 291.8 L839.3 378" stroke="#555" stroke-width="1.3" stroke-dasharray="14 3 3 3" stroke-dashoffset="6" fill="none"/>
<path d="M691 504.5 L744 472.5" stroke="#6a7a98" stroke-width="1.1" stroke-dasharray="12 4 2 4" fill="none"/>
<circle cx="811.4" cy="412.2" r="2.5" fill="#6c7078"/><circle cx="839.0" cy="383.5" r="2.5" fill="#6c7078"/><circle cx="746.0" cy="471.8" r="2.1" fill="#67768f"/><circle cx="689.0" cy="506.0" r="2.8" fill="#68748c"/><circle cx="813.0" cy="181.3" r="1.9" fill="#858a92"/><circle cx="888.0" cy="209.3" r="2.1" fill="#7a7f87"/><circle cx="861.3" cy="225.2" r="2.3" fill="#757a82"/><circle cx="759.5" cy="345.7" r="2.3" fill="#5e6573"/><circle cx="772.5" cy="219.0" r="1.7" fill="#7d8aa3"/><circle cx="1124.0" cy="516.0" r="2.1" fill="#767b83"/><circle cx="1438.0" cy="544.5" r="2.3" fill="#767b83"/><circle cx="1469.5" cy="565.0" r="2.3" fill="#767b83"/><circle cx="1084.0" cy="644.0" r="1.4" fill="#767b83"/>
<path d="M763 210 Q772 200.5 784 192.8" stroke="#222a3c" stroke-width="2.6" fill="none" stroke-linecap="round"/>
<path d="M1129.3 201.6 L1129.3 214.9 L1132.4 212.3 L1135.6 219.4 L1138 218.4 L1134.8 211.4 L1138.9 211.3 Z" fill="#0a0a0a" stroke="#fff" stroke-width="1.3" stroke-linejoin="round"/>
</svg>
<svg id="vcube" width="1600" height="900" viewBox="0 0 1600 900" style="position:absolute;left:0;top:0;pointer-events:none;will-change:transform">
<path d="M1487.8 115 L1480 126.6 H1496.2 Z" fill="#dde5ee"/><path d="M1487.8 300.6 L1478.9 289.4 H1496.7 Z" fill="#dde5ee"/><path d="M1394.4 207.7 L1406.7 199.4 V216.1 Z" fill="#dde5ee"/><path d="M1581.1 207.7 L1569.6 199.4 V216.1 Z" fill="#dde5ee"/><path d="M1461 127.5 Q1440 135 1428 150" fill="none" stroke="#dde5ee" stroke-width="6"/><path d="M1421.5 141 L1422 157.5 L1437 151 Z" fill="#dde5ee"/><path d="M1514.5 127.5 Q1536 135 1547.5 150" fill="none" stroke="#dde5ee" stroke-width="6"/><path d="M1554 141 L1553.5 157.5 L1538.5 151 Z" fill="#dde5ee"/><path d="M1489 158.5 L1535.5 179 V235 L1494 257.5 L1441.5 235 L1442.5 181.5 Z" fill="#dde5ee" stroke="#dde5ee" stroke-width="5" stroke-linejoin="round"/><path d="M1488.5 163 L1523 176 L1494.5 188 L1457 179.5 Z" fill="#fdfdfc" stroke="#fdfdfc" stroke-width="4" stroke-linejoin="round"/><path d="M1448 192.5 L1485 204.5 L1486 246 L1448 230.5 Z" fill="#fdfdfc" stroke="#fdfdfc" stroke-width="4" stroke-linejoin="round"/><path d="M1502 205 L1531 190.5 L1531 230 L1502.5 245.5 Z" fill="#fdfdfc" stroke="#fdfdfc" stroke-width="4" stroke-linejoin="round"/><circle cx="1493.3" cy="198.8" r="7.8" fill="#fdfdfc"/><ellipse cx="1445.5" cy="182.8" rx="3.5" ry="6" transform="rotate(35 1445.5 182.8)" fill="#fdfdfc"/><ellipse cx="1494.4" cy="251" rx="7" ry="4.5" fill="#fdfdfc"/><ellipse cx="1530.5" cy="176" rx="3" ry="5.5" transform="rotate(-40 1530.5 176)" fill="#fdfdfc"/><path d="M1435.2 246 L1465.5 227.5" stroke="#a9d08e" stroke-width="1.2"/><path d="M1435.2 180.5 V246" stroke="#3a4fd0" stroke-width="1.6"/><path d="M1435.2 246 L1494.4 264" stroke="#d04545" stroke-width="1.6"/><text x="1433.8" y="174.5" font-family="Liberation Sans, sans-serif" font-size="13.5" font-weight="700" fill="#5064c8" text-anchor="middle">Z</text><text x="1504.5" y="274" font-family="Liberation Sans, sans-serif" font-size="13.5" fill="#d25a5a" text-anchor="middle">X</text><text x="1485.5" y="218.5" font-family="Liberation Sans, sans-serif" font-size="10" fill="#b9dca6" text-anchor="middle">Y</text><text transform="translate(1466.5 224.5) rotate(15) skewX(8)" font-family="Liberation Sans, sans-serif" font-size="12.5" fill="#2a2a2a" stroke="#2a2a2a" stroke-width="0.35" text-anchor="middle">Front</text><text transform="translate(1518.5 220) rotate(-27) skewX(-18)" font-family="Liberation Sans, sans-serif" font-size="11.5" fill="#2a2a2a" stroke="#2a2a2a" stroke-width="0.35" text-anchor="middle">Right</text><text transform="translate(1488.5 177) rotate(20) skewX(-40) scale(1 0.7)" font-family="Liberation Sans, sans-serif" font-size="11" fill="#2a2a2a" stroke="#2a2a2a" stroke-width="0.4" text-anchor="middle">Top</text><path d="M1544.5 280 L1554.5 283.5 V297 L1545 301.5 L1535 297.5 V283.5 Z" fill="#e8e8e8" stroke="#3a3a3a" stroke-width="1.3" stroke-linejoin="round"/><path d="M1535 283.5 L1545 287 V301.5 L1535 297.5 Z" fill="#a8a8a8"/><path d="M1545 287 L1554.5 283.5 V297 L1545 301.5 Z" fill="#d6d6d6"/><path d="M1544.5 280 L1554.5 283.5 V297 L1545 301.5 L1535 297.5 V283.5 Z M1535 283.5 L1545 287 L1554.5 283.5 M1545 287 V301.5" fill="none" stroke="#3a3a3a" stroke-width="1.2" stroke-linejoin="round"/><path d="M1566 287.5 h9 l-4.5 4.5 z" fill="#222"/></svg>
<div class="abs" style="left:1560.5px;top:406.6px;width:41px;height:42.2px;border:1px solid #cfcfcf;box-sizing:border-box;background:#fefefe"></div><div class="abs" style="left:1560.5px;top:447.8px;width:41px;height:42.2px;border:1px solid #cfcfcf;box-sizing:border-box;background:#fefefe"></div><div class="abs" style="left:1560.5px;top:489.0px;width:41px;height:42.2px;border:1px solid #cfcfcf;box-sizing:border-box;background:#fefefe"></div>
<div id="bottom"></div><div class="abs" style="left:95.2px;top:863px;width:249.8px;height:35.2px;background:#fefefe;border-bottom:2.5px solid #2b4cab;box-sizing:border-box;border-radius:0 0 3px 3px"></div><span class="t " style="left:137.5px;top:868.3px;font-size:17.4px;color:#333;font-weight:400;">Water Bottle Cap</span>
<svg id="icons2" width="1600" height="900" viewBox="0 0 1600 900" style="position:absolute;left:0;top:0;pointer-events:none">
<path d="M175 110.3 H178.8 L180.8 113 H192.5 V125.8 H183" fill="none" stroke="#b4b4bc" stroke-width="1.3"/><path d="M171 113 V110.3 H173.5 M171 115.5 V118 M171 123 V125.8 H174" fill="none" stroke="#b4b4bc" stroke-width="1.3"/><path d="M172.5 120.3 H181.5 M177 115.8 V124.8" stroke="#8a9bc0" stroke-width="1.6" fill="none"/><circle cx="219.4" cy="118.6" r="8.3" fill="none" stroke="#222" stroke-width="2"/><path d="M215.8 108 H223 M219.4 108 V110.5 M225.5 111 L227 112.5" stroke="#222" stroke-width="1.8" fill="none"/><path d="M219.4 118.6 L223.5 123" stroke="#222" stroke-width="1.5"/><path d="M19.8 147.3 H37.6 L30.3 156.3 V164 L27 161.8 V156.3 Z" fill="none" stroke="#222" stroke-width="1.3" stroke-linejoin="round"/><clipPath id="listclip"><rect x="0" y="179" width="250" height="392.5"/></clipPath><g clip-path="url(#listclip)"><g transform="translate(33.0 171.5)" opacity="1.00"><path d="M2 15.5 L3.6 10.8 L13.8 0.8 L17 4 L6.8 14 Z M3.6 10.8 L6.8 14 M11.8 2.8 L15 6" fill="#fff" stroke="#bdbdbd" stroke-width="1.1" stroke-linejoin="round"/><path d="M0 17 H19" stroke="#c3cbe6" stroke-width="1.2"/></g><g transform="translate(33.0 203.3)"><path d="M0.5 0.5 H15.5 L18.5 3.5 V18 H3.5 L0.5 15 Z" fill="#fff" stroke="#333" stroke-width="1.2" stroke-linejoin="round"/><path d="M0.5 0.5 L3.5 3.5 H18.5 M3.5 3.5 V18" fill="none" stroke="#999" stroke-width="0.8"/><rect x="7" y="6.5" width="11.5" height="11.5" fill="#8f8f8f" stroke="#555" stroke-width="0.8"/></g><g transform="translate(33.5 235.4)"><path d="M4 3 C4 9 3 13 0.5 15.5 Q9 20 18 15.5 C15.5 13 14.5 9 14.5 3 Z" fill="#8f8f8f" stroke="#444" stroke-width="1" stroke-linejoin="round"/><ellipse cx="9.25" cy="3" rx="5.25" ry="2.3" fill="#fff" stroke="#444" stroke-width="1"/></g><g transform="translate(34.0 269.0)"><rect x="0.5" y="0.5" width="13" height="12.5" fill="#fff" stroke="#c4c4c4" stroke-width="1"/><rect x="3.5" y="3.5" width="11" height="11" fill="#a8a8a8"/><circle cx="13" cy="12.8" r="5" fill="#333"/><path d="M11 10.8 L15 14.8 M15 10.8 L11 14.8" stroke="#fff" stroke-width="1.5"/></g><path d="M6.8 307.5 l6.3 6 l6.3 -6" fill="none" stroke="#333" stroke-width="2.2" stroke-linecap="round" stroke-linejoin="round"/><g transform="translate(33.4 333.1)"><path d="M0.5 0.5 L18.5 3 V18.5 L0.5 15.5 Z" fill="#ececec" stroke="#b8b8b8" stroke-width="1.2" stroke-linejoin="round"/><path d="M7.5 1.5 V9.5 L18.5 11.5" fill="none" stroke="#b8b8b8" stroke-width="1.2"/></g><g transform="translate(33.0 366.5)" opacity="1.00"><path d="M2 15.5 L3.6 10.8 L13.8 0.8 L17 4 L6.8 14 Z M3.6 10.8 L6.8 14 M11.8 2.8 L15 6" fill="#fff" stroke="#333" stroke-width="1.1" stroke-linejoin="round"/><path d="M0 17 H19" stroke="#3d56b4" stroke-width="1.2"/></g><g transform="translate(33.0 399.0)" opacity="1.00"><path d="M2 15.5 L3.6 10.8 L13.8 0.8 L17 4 L6.8 14 Z M3.6 10.8 L6.8 14 M11.8 2.8 L15 6" fill="#fff" stroke="#bdbdbd" stroke-width="1.1" stroke-linejoin="round"/><path d="M0 17 H19" stroke="#c3cbe6" stroke-width="1.2"/></g><g transform="translate(33.4 430.6)"><path d="M0.5 0.5 L18.5 3 V18.5 L0.5 15.5 Z" fill="#ececec" stroke="#b8b8b8" stroke-width="1.2" stroke-linejoin="round"/><path d="M7.5 1.5 V9.5 L18.5 11.5" fill="none" stroke="#b8b8b8" stroke-width="1.2"/></g><g transform="translate(33.0 464.0)" opacity="1.00"><path d="M2 15.5 L3.6 10.8 L13.8 0.8 L17 4 L6.8 14 Z M3.6 10.8 L6.8 14 M11.8 2.8 L15 6" fill="#fff" stroke="#333" stroke-width="1.1" stroke-linejoin="round"/><path d="M0 17 H19" stroke="#3d56b4" stroke-width="1.2"/></g><path d="M6.8 502.5 l6.3 6 l6.3 -6" fill="none" stroke="#333" stroke-width="2.2" stroke-linecap="round" stroke-linejoin="round"/><g transform="translate(32.8 528.2)"><path d="M1.5 5.5 Q5 0.5 11 0.8 Q16 0.5 17.5 4 Q19.5 10 18 14 Q15 18.8 8.5 18.5 Q3.5 18.5 1.8 14 Q-0.5 9 1.5 5.5 Z" fill="#d9dbe0" stroke="#444" stroke-width="1.2"/><path d="M5 2.5 Q9 9 7.5 18 M11.5 1 Q15 9 13.5 17.5 M1 8.5 Q9 6 18.5 6.5 M1.5 13.5 Q9 10.5 18.5 11.5" fill="none" stroke="#777" stroke-width="0.9"/></g></g><path d="M6.6 585.3 l6.3 6 l6.3 -6" fill="none" stroke="#333" stroke-width="2.2" stroke-linecap="round" stroke-linejoin="round"/><path d="M9.9 614.5 l6.2 6 l-6.2 6" fill="none" stroke="#333" stroke-width="2.3" stroke-linecap="round" stroke-linejoin="round"/><path d="M265.7 458.3 L269.3 462 L273 458.3" fill="none" stroke="#333" stroke-width="1.5"/><path d="M269.2 464.3 V480" stroke="#7a7a7a" stroke-width="2"/><path d="M275.3 459.8 H288 M272 466.1 H288 M272 472.3 H288 M272 478.5 H288" stroke="#222" stroke-width="1.4"/><path d="M532.4 157.3 L540 164 L551.1 152.9" fill="none" stroke="#fff" stroke-width="3"/><path d="M570.2 152 L582.6 164.4 M582.6 152 L570.2 164.4" fill="none" stroke="#c4512f" stroke-width="3"/><circle cx="1581.2" cy="422.5" r="6.3" fill="#9a9a9a" stroke="#555" stroke-width="1"/><circle cx="1588.5" cy="432.3" r="6" fill="#fff" stroke="#444" stroke-width="1"/><circle cx="1576.5" cy="432.3" r="6.3" fill="#2b4cc4" stroke="#1d2f70" stroke-width="1"/><path d="M1574.5 464.5 l9.5 -4 l9 4.5 v10.5 l-9.5 4.5 l-9 -4.5 z m0 0 l9 4.5 l9.5 -4 m-9.5 4 v11" fill="#fefefe" stroke="#333" stroke-width="1.2" stroke-linejoin="round"/><rect x="1569.2" y="456.8" width="12.8" height="9.4" fill="#3553c0"/><path d="M1573.5 456.8 V466.2 M1577.7 456.8 V466.2 M1569.2 460 H1582 M1569.2 463 H1582" stroke="#e8ecff" stroke-width="0.9"/><path d="M1575.5 506 l7.5 -3 l7 3.5 v7.5 l-7.5 3.5 l-7 -3.5 z m0 0 l7 3.5 l7.5 -3 m-7.5 3 v8" fill="#fefefe" stroke="#444" stroke-width="1.1" stroke-linejoin="round"/><rect x="1569.2" y="498" width="12.8" height="9.4" fill="#3a3a3a"/><path d="M1573.5 498 V507.4 M1577.7 498 V507.4 M1569.2 501.2 H1582 M1569.2 504.2 H1582" stroke="#eee" stroke-width="0.9"/><path d="M1575 508.5 q-2 0 -2 2 v2 q0 1.8 -1.8 1.8 q1.8 0 1.8 1.8 v2 q0 2 2 2 M1589.5 501 q2 0 2 2 v5 q0 2 1.8 2 q-1.8 0 -1.8 2 v5.5 q0 2 -2 2" fill="none" stroke="#444" stroke-width="1.2"/><path d="M11.7 872.9 H31.9" stroke="#555" stroke-width="2"/><circle cx="18.3" cy="881.8" r="5.3" fill="none" stroke="#555" stroke-width="2"/><path d="M22 885.8 L26.5 890.5" stroke="#555" stroke-width="2.2"/><path d="M26.5 878.5 H31.9 M27.5 883 H31.9" stroke="#555" stroke-width="1.8"/><path d="M58.3 881.1 H76.3 M67.3 872.1 V890.1" stroke="#555" stroke-width="3"/><path d="M111 877.5 L114 875 H119.5 V887.5 L116.5 889.5 H111 Z" fill="#fff" stroke="#333" stroke-width="1.2" stroke-linejoin="round"/><path d="M111 877.5 H116.5 V889.5 M116.5 877.5 L119.5 875" fill="none" stroke="#333" stroke-width="1"/><path d="M121 871 L124 868.5 H129.5 L131.5 871 V887.5 L128.5 889.5 H121 Z" fill="#fff" stroke="#333" stroke-width="1.2" stroke-linejoin="round"/><path d="M121 871 H128.5 V889.5 M128.5 871 L129.5 868.5" fill="none" stroke="#333" stroke-width="1"/><path d="M0 900 V894.5 A5.5 5.5 0 0 0 5.5 900 Z" fill="#1c1c1c" stroke="#eee" stroke-width="0.8"/><path d="M1600 900 V894.5 A5.5 5.5 0 0 1 1594.5 900 Z" fill="#1c1c1c" stroke="#eee" stroke-width="0.8"/></svg>
</body></html>
